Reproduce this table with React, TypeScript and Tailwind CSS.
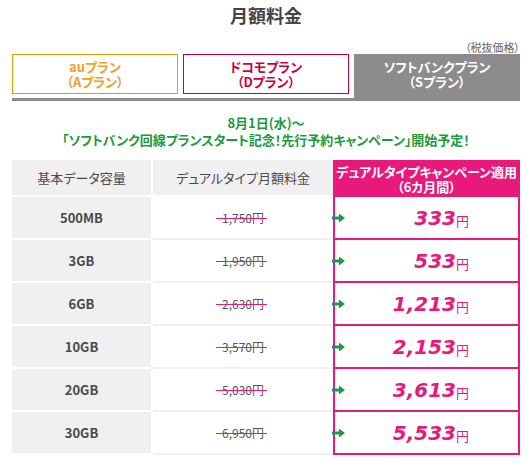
import { Fragment } from "react";

const rows = [
  { size: "500MB", before: "1,750円", after: "333" },
  { size: "3GB", before: "1,950円", after: "533" },
  { size: "6GB", before: "2,630円", after: "1,213" },
  { size: "10GB", before: "3,570円", after: "2,153" },
  { size: "20GB", before: "5,030円", after: "3,613" },
  { size: "30GB", before: "6,950円", after: "5,533" },
];

function Arrow() {
  return (
    <svg width="13" height="9" viewBox="0 0 13 9" className="absolute left-[-3px] top-1/2 -translate-y-1/2">
      <path d="M0 3h7V0l6 4.5-6 4.5V6H0z" fill="#1c9a48" />
    </svg>
  );
}

export default function App() {
  return (
    <div className="w-[532px] h-[470px] bg-white px-3 font-['Noto_Sans_CJK_JP',sans-serif] text-[#4a4a4a] [font-feature-settings:'palt']">
      <div className="h-[30px] flex items-center justify-center text-[18px] font-bold text-[#444]">月額料金</div>
      <div className="mt-[10px] leading-[14px] text-right text-[11px] text-[#666]">（税抜価格）</div>

      <div className="flex items-start gap-[5px]">
        <div className="w-[166px] h-[40px] border border-[#ee9a00] flex items-center justify-center text-center whitespace-pre-line text-[13px] leading-[15px] font-bold text-[#f0a020]">
          {"auプラン\n（Aプラン）"}
        </div>
        <div className="w-[166px] h-[40px] border border-[#cc0039] flex items-center justify-center text-center whitespace-pre-line text-[13px] leading-[15px] font-bold text-[#cc0040]">
          {"ドコモプラン\n（Dプラン）"}
        </div>
        <div className="flex-1 h-[44px] bg-[#8c8c8c] flex items-center justify-center text-center whitespace-pre-line pb-[4px] text-[13px] leading-[15px] font-bold text-white">
          {"ソフトバンクプラン\n（Sプラン）"}
        </div>
      </div>
      <div className="h-[3px] bg-[#8c8c8c]" />

      <div className="mt-[13px] text-center whitespace-pre-line text-[13px] leading-[17px] font-bold text-[#1c9a3c]">
        {"8月1日(水)～\n「ソフトバンク回線プランスタート記念！先行予約キャンペーン」開始予定！"}
      </div>

      <div className="mt-[12px] grid grid-cols-[139px_2px_180px_1fr]">
        <div className="h-[37px] border-b-2 border-white bg-[#f0f0f0] flex items-center justify-center text-[13px]">基本データ容量</div>
        <div />
        <div className="h-[37px] border-b-2 border-white bg-[#f0f0f0] flex items-center justify-center text-[13px]">デュアルタイプ月額料金</div>
        <div className="h-[37px] bg-[#e8197b] flex items-center justify-center text-center whitespace-pre-line text-[13px] leading-[15px] font-bold text-white">
          {"デュアルタイプキャンペーン適用\n（6カ月間）"}
        </div>

        {rows.map((r) => (
          <Fragment key={r.size}>
            <div className="h-[43px] border-b-2 border-white bg-[#f0f0f0] flex items-center justify-center text-[13px] font-bold text-[#4a4a4a]">
              {r.size}
            </div>
            <div />
            <div className="h-[43px] border-b-2 border-[#f0f0f0] bg-white flex items-center justify-center">
              <span className="relative text-[12px] text-[#555]">
                {r.before}
                <span className="absolute left-[-6px] right-[-3px] top-1/2 h-px bg-[#e8197b]" />
              </span>
            </div>
            <div className="relative h-[43px] border-x-2 border-b-2 border-[#e8197b] flex items-center justify-end pr-[49px] text-[#e8197b]">
              <Arrow />
              <span className="font-['DejaVu_Sans',sans-serif] text-[20px] font-bold italic leading-none">{r.after}</span>
              <span className="text-[13px] leading-none mt-[6px]">円</span>
            </div>
          </Fragment>
        ))}
      </div>
    </div>
  );
}
